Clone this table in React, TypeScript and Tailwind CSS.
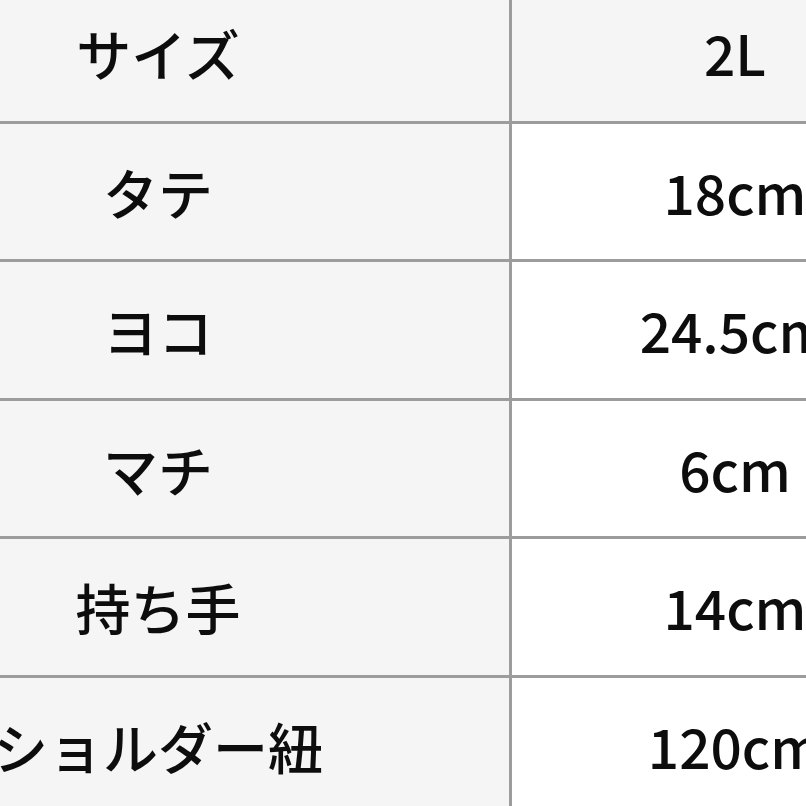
const rows = [
  { label: "サイズ", value: "2L", head: true },
  { label: "タテ", value: "18cm" },
  { label: "ヨコ", value: "24.5cm" },
  { label: "マチ", value: "6cm" },
  { label: "持ち手", value: "14cm" },
  { label: "ショルダー紐", value: "120cm" },
];

export default function App() {
  return (
    <div className="w-[806px] h-[806px] overflow-hidden bg-white text-[#0d0d0d] font-medium font-['Noto_Sans_CJK_JP','Noto_Sans',sans-serif]">
      <div className="grid grid-cols-[705px_446px] ml-[-193px] mt-[-15px]">
        {rows.map((row) => (
          <div key={row.label} className="contents">
            <div className="h-[138.5px] flex items-center justify-center bg-[#f5f5f5] border-b-[3px] border-r-[3px] border-[#9c9c9c] text-[55px] leading-none">
              {row.label}
            </div>
            <div
              className={
                row.head
                  ? "h-[138.5px] flex items-center justify-center bg-[#f5f5f5] border-b-[3px] border-[#9c9c9c] text-[55px] leading-none"
                  : "h-[138.5px] flex items-center justify-center bg-white border-b-[3px] border-[#9c9c9c] text-[55px] leading-none"
              }
            >
              {row.value}
            </div>
          </div>
        ))}
      </div>
    </div>
  );
}
